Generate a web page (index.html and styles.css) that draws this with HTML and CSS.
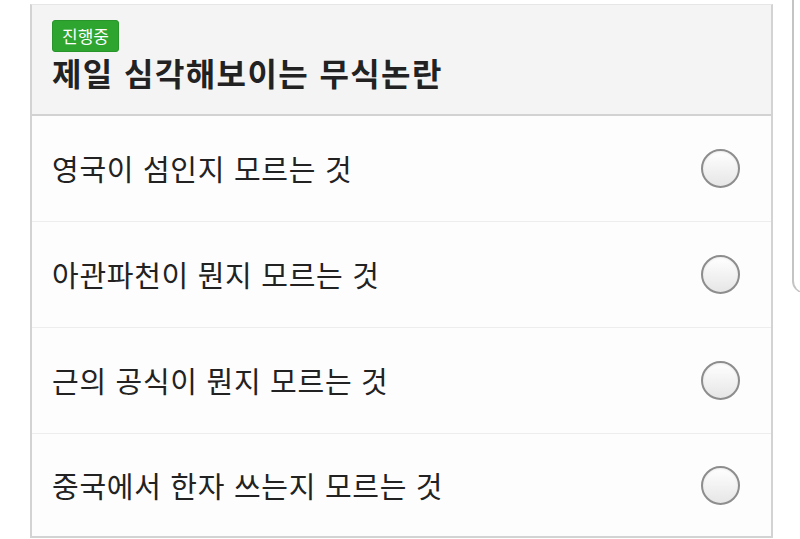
FILE: index.html
```html
<!DOCTYPE html>
<html lang="ko">
<head>
<meta charset="utf-8">
<title>투표</title>
<link rel="stylesheet" href="styles.css">
</head>
<body>
<div class="page">
  <div class="card">
    <div class="header">
      <span class="badge">진행중</span>
      <h1 class="title">제일 심각해보이는 무식논란</h1>
    </div>
    <ul class="options">
      <li class="option"><span class="label">영국이 섬인지 모르는 것</span><span class="radio"></span></li>
      <li class="option"><span class="label">아관파천이 뭔지 모르는 것</span><span class="radio"></span></li>
      <li class="option"><span class="label">근의 공식이 뭔지 모르는 것</span><span class="radio"></span></li>
      <li class="option"><span class="label">중국에서 한자 쓰는지 모르는 것</span><span class="radio"></span></li>
    </ul>
  </div>
  <div class="edge"></div>
</div>
</body>
</html>
```

FILE: styles.css
```css
html, body {
  margin: 0;
  padding: 0;
  background: #ffffff;
}
body {
  font-family: "Noto Sans CJK KR", "Noto Sans", sans-serif;
  color: #222222;
  overflow: hidden;
}
.page {
  position: relative;
  width: 800px;
  height: 539px;
  padding: 4px 0 0 30px;
  box-sizing: border-box;
}
.card {
  width: 743px;
  box-sizing: border-box;
  border: 2px solid #d3d3d3;
  border-top: 1px solid #e6e6e6;
  background: #fdfdfd;
}
.header {
  background: #f4f4f4;
  height: 111px;
  box-sizing: border-box;
  padding: 15px 20px 0 20px;
  border-bottom: 2px solid #d2d2d2;
  display: flex;
  flex-direction: column;
  align-items: flex-start;
}
.badge {
  display: block;
  background: #2ea52e;
  border: 1px solid #27952a;
  color: #ffffff;
  font-size: 17px;
  line-height: 30px;
  height: 30px;
  padding: 0 9px;
  border-radius: 3px;
}
.title {
  margin: 0;
  font-size: 32px;
  font-weight: 700;
  line-height: 40px;
  letter-spacing: 1.4px;
  color: #222222;
}
.options {
  list-style: none;
  margin: 0;
  padding: 0;
}
.option {
  height: 105px;
  border-bottom: 1px solid #ededed;
  display: flex;
  align-items: center;
  justify-content: space-between;
  padding: 0 31px 0 20px;
}
.option:last-child {
  border-bottom: none;
  height: 102px;
}
.label {
  font-size: 29px;
  line-height: 1;
  letter-spacing: 0.7px;
  color: #222222;
}
.radio {
  width: 39px;
  height: 39px;
  box-sizing: border-box;
  border-radius: 50%;
  border: 2px solid #8d8d8d;
  background: linear-gradient(#ffffff, #e6e6e6);
  box-shadow: inset 0 1px 2px rgba(0,0,0,0.08);
}
.edge {
  position: absolute;
  left: 792px;
  top: -10px;
  width: 14px;
  height: 302px;
  border-left: 2px solid #c4c4c4;
  border-bottom: 1px solid #c4c4c4;
  border-bottom-left-radius: 12px;
}
```
